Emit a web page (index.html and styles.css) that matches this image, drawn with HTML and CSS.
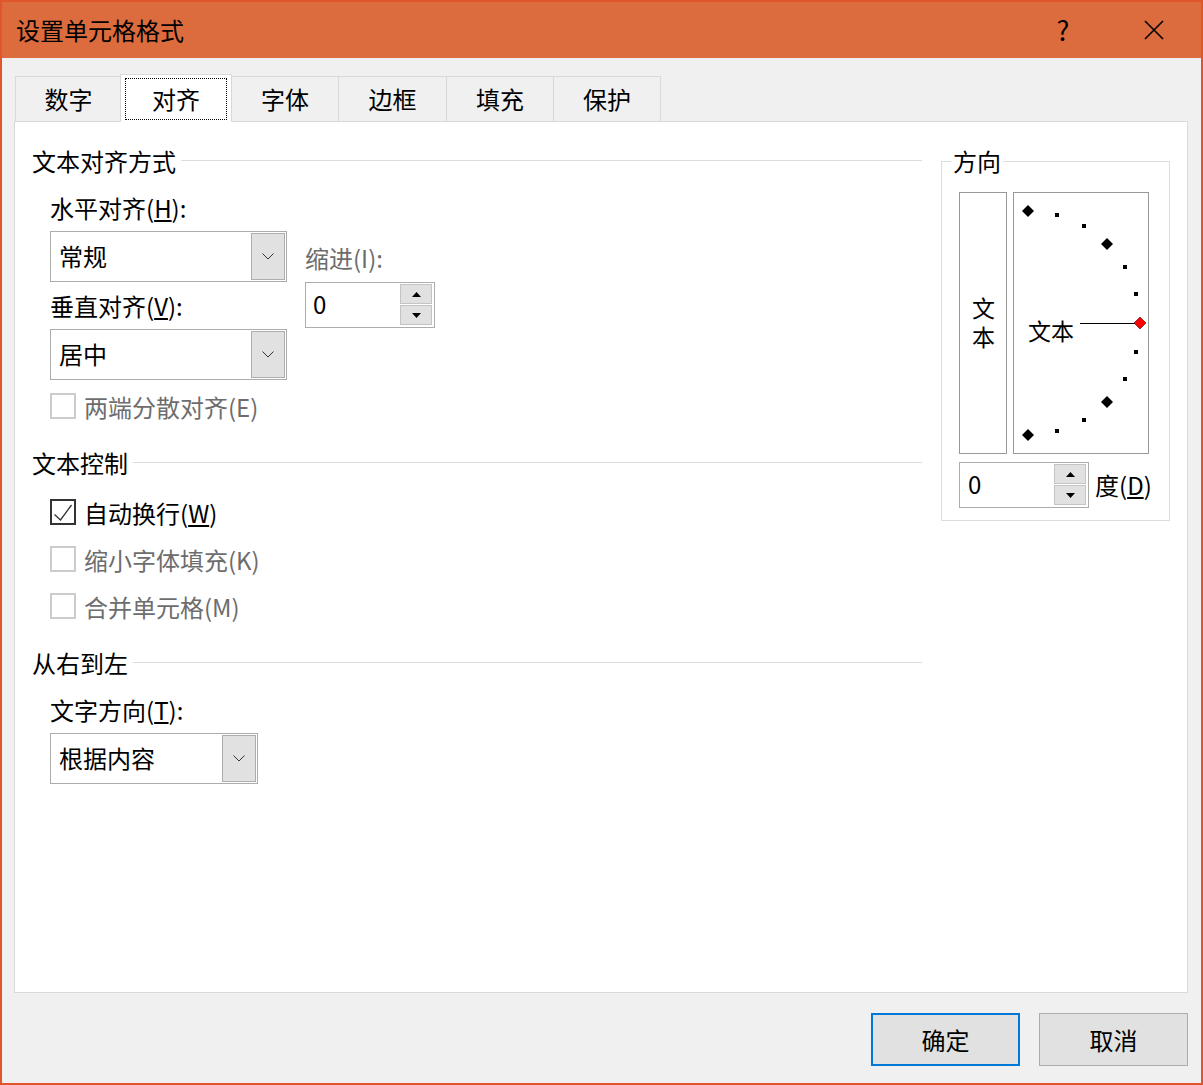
FILE: index.html
```html
<!DOCTYPE html>
<html lang="zh-CN">
<head>
<meta charset="UTF-8">
<title>设置单元格格式</title>
<link rel="stylesheet" href="styles.css">
</head>
<body>
<div class="dialog">
  <div class="titlebar">
    <div class="title">设置单元格格式</div>
    <div class="help">?</div>
    <div class="close">
      <svg width="20" height="20" viewBox="0 0 20 20"><path d="M1 1L19 19M19 1L1 19" stroke="#000" stroke-width="1.6"/></svg>
    </div>
  </div>

  <div class="main">
    <div class="tabs">
      <div class="tab first">数字</div>
      <div class="tab active"><span class="focus">对齐</span></div>
      <div class="tab">字体</div>
      <div class="tab wide">边框</div>
      <div class="tab">填充</div>
      <div class="tab last">保护</div>
    </div>

    <div class="panel">
      <div class="left">
        <!-- 文本对齐方式 -->
        <div class="section-head"><span>文本对齐方式</span><i class="rule"></i></div>
        <div class="align-row">
          <div class="align-col">
            <div class="label lbl-h">水平对齐(<u>H</u>):</div>
            <div class="combo">
              <span class="val">常规</span>
              <span class="drop"><svg width="12" height="7" viewBox="0 0 12 7"><path d="M0.5 0.5L6 6L11.5 0.5" fill="none" stroke="#333"/></svg></span>
            </div>
            <div class="label lbl-v">垂直对齐(<u>V</u>):</div>
            <div class="combo">
              <span class="val">居中</span>
              <span class="drop"><svg width="12" height="7" viewBox="0 0 12 7"><path d="M0.5 0.5L6 6L11.5 0.5" fill="none" stroke="#333"/></svg></span>
            </div>
          </div>
          <div class="indent-col">
            <div class="label dim lbl-indent">缩进(I):</div>
            <div class="spin spin-indent">
              <span class="num">0</span>
              <span class="spin-btns">
                <span><svg width="9" height="5" viewBox="0 0 9 5"><path d="M0 5L4.5 0L9 5Z"/></svg></span>
                <span><svg width="9" height="5" viewBox="0 0 9 5"><path d="M0 0L4.5 5L9 0Z"/></svg></span>
              </span>
            </div>
          </div>
        </div>
        <div class="check disabled chk-justify"><span class="box"></span><span>两端分散对齐(E)</span></div>

        <!-- 文本控制 -->
        <div class="section-head sec-2"><span>文本控制</span><i class="rule"></i></div>
        <div class="check chk-wrap">
          <span class="box"><svg width="22" height="22" viewBox="0 0 22 22"><path d="M2.5 13.5L8.5 19L19.5 4" fill="none" stroke="#333" stroke-width="1.3"/></svg></span>
          <span>自动换行(<u>W</u>)</span>
        </div>
        <div class="check disabled chk-next"><span class="box"></span><span>缩小字体填充(K)</span></div>
        <div class="check disabled chk-next"><span class="box"></span><span>合并单元格(M)</span></div>

        <!-- 从右到左 -->
        <div class="section-head sec-3"><span>从右到左</span><i class="rule"></i></div>
        <div class="label lbl-dir">文字方向(<u>T</u>):</div>
        <div class="combo combo-dir">
          <span class="val">根据内容</span>
          <span class="drop"><svg width="12" height="7" viewBox="0 0 12 7"><path d="M0.5 0.5L6 6L11.5 0.5" fill="none" stroke="#333"/></svg></span>
        </div>
      </div>

      <fieldset class="orient">
        <legend>方向</legend>
        <div class="orient-row">
          <div class="vbox"><span class="vtext">文本</span></div>
          <div class="dial">
            <svg width="134" height="260" viewBox="0 0 134 260">
              <polygon points="14,12 20,18 14,24 8,18"/>
              <polygon points="93,45 99,51 93,57 87,51"/>
              <polygon points="93,203 99,209 93,215 87,209"/>
              <polygon points="14,236 20,242 14,248 8,242"/>
              <rect x="41" y="20" width="4" height="4"/>
              <rect x="68" y="31" width="4" height="4"/>
              <rect x="109" y="72" width="4" height="4"/>
              <rect x="120" y="99" width="4" height="4"/>
              <rect x="120" y="157" width="4" height="4"/>
              <rect x="109" y="184" width="4" height="4"/>
              <rect x="68" y="225" width="4" height="4"/>
              <rect x="41" y="236" width="4" height="4"/>
              <line x1="66" y1="130.5" x2="121" y2="130.5" stroke="#000" stroke-width="1"/>
              <polygon points="126,124 132,130 126,136 120,130" fill="#f00" stroke="#400" stroke-width="0.6"/>
              <text x="14" y="137" class="dial-text" dominant-baseline="central">文本</text>
            </svg>
          </div>
        </div>
        <div class="deg-row">
          <div class="spin spin-deg">
            <span class="num">0</span>
            <span class="spin-btns">
              <span><svg width="9" height="5" viewBox="0 0 9 5"><path d="M0 5L4.5 0L9 5Z"/></svg></span>
              <span><svg width="9" height="5" viewBox="0 0 9 5"><path d="M0 0L4.5 5L9 0Z"/></svg></span>
            </span>
          </div>
          <span class="deg-label">度(<u>D</u>)</span>
        </div>
      </fieldset>
    </div>
  </div>

  <div class="footer">
    <button class="btn default">确定</button>
    <button class="btn">取消</button>
  </div>
</div>
</body>
</html>
```

FILE: styles.css
```css
* {
  box-sizing: border-box;
}
body {
  margin: 0;
  font-family: "Noto Sans CJK SC", "Noto Sans", sans-serif;
  font-size: 24px;
  color: #000;
  background: #f0f0f0;
}
.dialog {
  width: 1203px;
  height: 1085px;
  border: 2px solid #e0562a;
  background: #f0f0f0;
  display: flex;
  flex-direction: column;
}

/* title bar */
.titlebar {
  height: 56px;
  flex-shrink: 0;
  background: #dc6b3e;
  display: flex;
  align-items: center;
  padding-left: 14px;
}
.title {
  flex: 1;
  line-height: 32px;
}
.help {
  width: 46px;
  text-align: center;
  font-size: 27px;
  line-height: 32px;
}
.close {
  width: 60px;
  margin-left: 38px;
  margin-right: 17px;
  display: flex;
  justify-content: center;
}

/* tabs + panel */
.main {
  padding: 16px 13px 0 12px;
}
.tabs {
  display: flex;
  align-items: flex-end;
  height: 47px;
  margin-left: 1px;
}
.tab {
  width: 107px;
  height: 45px;
  border-top: 1px solid #d9d9d9;
  border-left: 1px solid #d9d9d9;
  display: flex;
  align-items: center;
  justify-content: center;
  line-height: 32px;
}
.tab.first {
  width: 106px;
}
.tab.wide {
  width: 108px;
}
.tab.last {
  width: 108px;
  border-right: 1px solid #d9d9d9;
}
.tab.active {
  width: 112px;
  height: 48px;
  margin: 0 -1px -1px -1px;
  border: 1px solid #d9d9d9;
  border-bottom: none;
  background: #fff;
  position: relative;
  z-index: 1;
  align-items: stretch;
}
.focus {
  flex: 1;
  margin: 3px 4px 2px 4px;
  border: 1px dotted #000;
  display: flex;
  align-items: center;
  justify-content: center;
}
.panel {
  height: 872px;
  border: 1px solid #d9d9d9;
  background: #fff;
  display: flex;
  align-items: flex-start;
  gap: 19px;
  padding: 23px 18px 0 17px;
}
.left {
  width: 890px;
  flex-shrink: 0;
}

/* section headers */
.section-head {
  display: flex;
  height: 32px;
  line-height: 32px;
}
.section-head .rule {
  flex: 1;
  height: 1px;
  background: #dcdcdc;
  margin: 15px 0 0 5px;
}
.sec-2,
.sec-3 {
  margin-top: 25px;
}

.label {
  height: 32px;
  line-height: 32px;
  white-space: nowrap;
}
.dim {
  color: #6d6d6d;
}

/* alignment block */
.align-row {
  display: flex;
  padding-left: 18px;
  margin-top: 15px;
}
.align-col {
  width: 237px;
}
.indent-col {
  margin-left: 18px;
}
.lbl-indent {
  margin-top: 50px;
}
.lbl-v {
  margin-top: 8px;
}

/* combo box */
.combo {
  display: flex;
  width: 237px;
  height: 51px;
  margin-top: 7px;
  border: 1px solid #acacac;
  background: #fff;
}
.combo .val {
  flex: 1;
  padding-left: 8px;
  line-height: 47px;
}
.combo .drop {
  width: 34px;
  margin: 1px;
  background: #e1e1e1;
  border: 1px solid #adadad;
  display: flex;
  align-items: center;
  justify-content: center;
}
.combo-dir {
  width: 208px;
  margin-left: 18px;
}
.lbl-dir {
  margin: 15px 0 0 18px;
}

/* spinner */
.spin {
  display: flex;
  height: 46px;
  border: 1px solid #acacac;
  background: #fff;
  flex-shrink: 0;
}
.spin .num {
  flex: 1;
  padding-left: 7px;
  line-height: 42px;
}
.spin-btns {
  width: 32px;
  margin: 1px 2px 2px 0;
  display: flex;
  flex-direction: column;
  gap: 1px;
}
.spin-btns span {
  flex: 1;
  background: #e1e1e1;
  border: 1px solid #c4c4c4;
  display: flex;
  align-items: center;
  justify-content: center;
}
.spin-indent {
  width: 130px;
  margin-top: 8px;
}

/* checkboxes */
.check {
  display: flex;
  align-items: center;
  gap: 8px;
  height: 32px;
  padding-left: 18px;
  white-space: nowrap;
}
.check .box {
  width: 26px;
  height: 26px;
  border: 2px solid #333;
  background: #fff;
  flex-shrink: 0;
}
.check .box svg {
  display: block;
}
.check.disabled {
  color: #6d6d6d;
}
.check.disabled .box {
  border-color: #cccccc;
}
.chk-justify {
  margin-top: 10px;
}
.chk-wrap {
  margin-top: 17px;
}
.chk-next {
  margin-top: 15px;
}

/* orientation group */
.orient {
  width: 229px;
  flex-shrink: 0;
  margin: 0;
  padding: 15px 18px 12px 17px;
  border: 1px solid #dcdcdc;
}
.orient legend {
  padding: 0 2px;
  margin-left: -8px;
  line-height: 32px;
}
.orient-row {
  display: flex;
  gap: 6px;
}
.vbox {
  width: 48px;
  height: 262px;
  border: 1px solid #999;
  display: flex;
  align-items: center;
  justify-content: center;
}
.vtext {
  writing-mode: vertical-rl;
  text-orientation: upright;
  font-size: 23px;
  line-height: 23px;
  letter-spacing: 6px;
  margin-top: 6px;
}
.dial {
  width: 136px;
  height: 262px;
  border: 1px solid #999;
}
.dial svg {
  display: block;
}
.dial-text {
  font-family: "Noto Sans CJK SC", sans-serif;
  font-size: 23px;
}
.deg-row {
  display: flex;
  align-items: center;
  margin-top: 8px;
  white-space: nowrap;
}
.spin-deg {
  width: 130px;
}
.spin-deg .num {
  padding-left: 8px;
}
.deg-label {
  margin-left: 6px;
  margin-right: -20px;
  line-height: 32px;
}

/* footer buttons */
.footer {
  display: flex;
  justify-content: flex-end;
  gap: 19px;
  margin-top: 20px;
  padding-right: 13px;
}
.btn {
  width: 149px;
  height: 53px;
  padding: 0;
  border: 1px solid #adadad;
  background: #e1e1e1;
  font-family: inherit;
  font-size: 24px;
  color: #000;
}
.btn.default {
  border: 2px solid #0078d7;
}
```
